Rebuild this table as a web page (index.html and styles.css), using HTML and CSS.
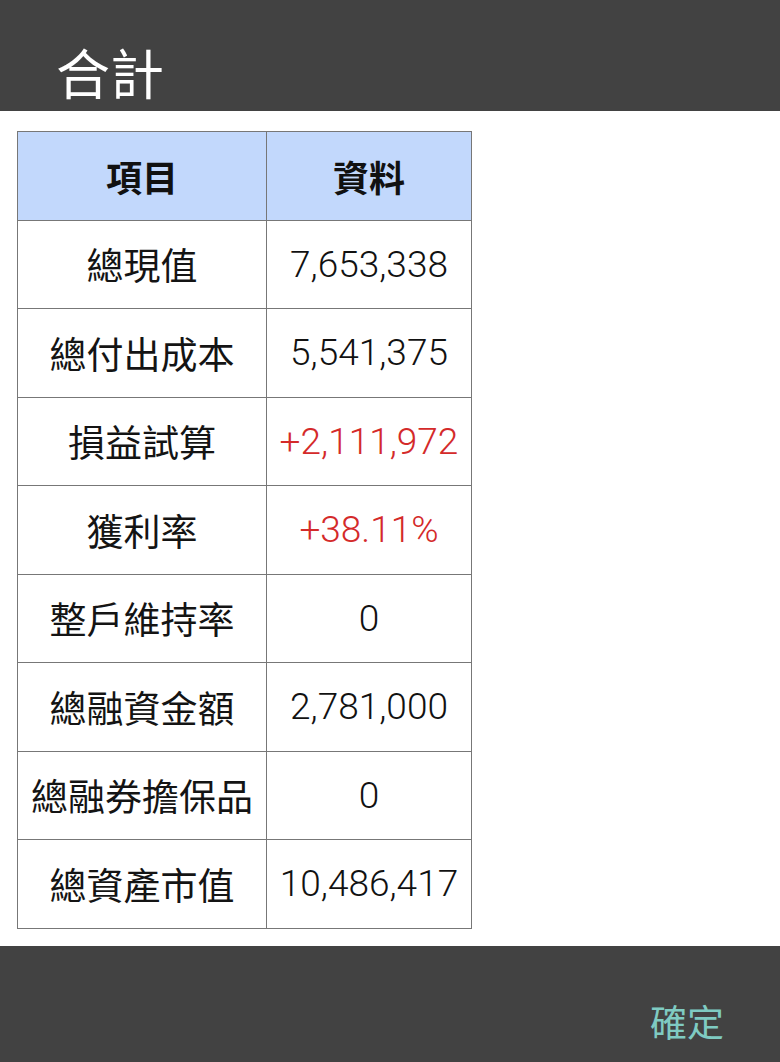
FILE: index.html
```html
<!DOCTYPE html>
<html lang="zh-Hant">
<head>
<meta charset="utf-8">
<title>合計</title>
<link rel="stylesheet" href="styles.css">
</head>
<body>
<div class="dialog">
  <header class="dialog-header">
    <h1 class="dialog-title">合計</h1>
  </header>
  <main class="dialog-body">
    <table class="summary">
      <thead>
        <tr><th class="col-item">項目</th><th class="col-data">資料</th></tr>
      </thead>
      <tbody>
        <tr><td>總現值</td><td class="num">7,653,338</td></tr>
        <tr><td>總付出成本</td><td class="num">5,541,375</td></tr>
        <tr><td>損益試算</td><td class="num up">+2,111,972</td></tr>
        <tr><td>獲利率</td><td class="num up">+38.11%</td></tr>
        <tr><td>整戶維持率</td><td class="num">0</td></tr>
        <tr><td>總融資金額</td><td class="num">2,781,000</td></tr>
        <tr><td>總融券擔保品</td><td class="num">0</td></tr>
        <tr><td>總資產市值</td><td class="num">10,486,417</td></tr>
      </tbody>
    </table>
  </main>
  <footer class="dialog-footer">
    <button class="btn-ok" type="button">確定</button>
  </footer>
</div>
</body>
</html>
```

FILE: styles.css
```css
html, body {
  margin: 0;
  padding: 0;
  background: #ffffff;
}
body {
  font-family: Roboto, "Noto Sans CJK TC", sans-serif;
}
.dialog {
  width: 780px;
  height: 1062px;
  display: flex;
  flex-direction: column;
}
.dialog-header {
  height: 111px;
  background: #424242;
  box-sizing: border-box;
  padding: 38px 0 0 56px;
}
.dialog-title {
  margin: 0;
  font-family: "Noto Sans CJK TC", sans-serif;
  font-weight: 400;
  font-size: 54px;
  line-height: 68px;
  color: #ffffff;
}
.dialog-body {
  flex: 1;
  padding: 20px 0 0 17px;
}
.summary {
  border-collapse: collapse;
  width: 453px;
  table-layout: fixed;
}
.summary th, .summary td {
  border: 1px solid #777777;
  height: 87.5px;
  padding: 0;
  text-align: center;
  vertical-align: middle;
  font-size: 37px;
  color: #141414;
  font-family: "Noto Sans CJK TC", sans-serif;
  font-weight: 400;
}
.summary th {
  background: #c2d8fc;
  font-weight: 700;
  font-size: 36px;
  color: #111111;
}
.col-item { width: 248px; }
.col-data { width: 204px; }
.summary td.num {
  font-family: Roboto, "Noto Sans CJK TC", sans-serif;
  font-weight: 300;
  color: #111111;
}
.summary td.up {
  color: #d42a2a;
}
.dialog-footer {
  height: 116px;
  background: #424242;
  box-sizing: border-box;
  padding: 55px 56px 0 0;
  display: flex;
  justify-content: flex-end;
  align-items: flex-start;
}
.btn-ok {
  background: none;
  border: none;
  padding: 0;
  margin: 0;
  font-family: "Noto Sans CJK TC", sans-serif;
  font-size: 37px;
  line-height: 40px;
  color: #7fcbc2;
}
```
